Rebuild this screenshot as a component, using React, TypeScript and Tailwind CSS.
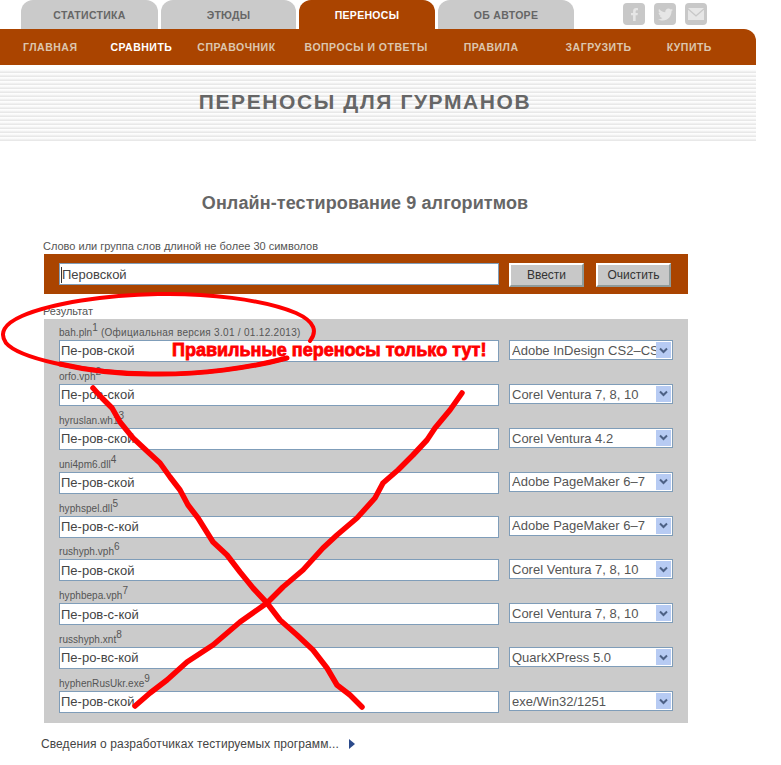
import React from "react";
import { FaFacebookF, FaTwitter } from "react-icons/fa";

const tabs = [
  { label: "Статистика", width: "w-[137px]" },
  { label: "Этюды", width: "w-[135px]" },
  { label: "Переносы", width: "w-[136px]", active: true },
  { label: "Об авторе", width: "w-[136px]" },
];

const navItems = [
  { label: "Главная", className: "ml-[23px]" },
  { label: "Сравнить", className: "ml-[33px] text-white" },
  { label: "Справочник", className: "ml-[25px]" },
  { label: "Вопросы и ответы", className: "ml-[29px]" },
  { label: "Правила", className: "ml-[36px]" },
  { label: "Загрузить", className: "ml-[47px]" },
  { label: "Купить", className: "ml-[35px]" },
];

const results = [
  { name: "bah.pln", sup: "1", note: " (Официальная версия 3.01 / 01.12.2013)", value: "Пе-ров-ской", app: "Adobe InDesign CS2–CS5" },
  { name: "orfo.vph", sup: "2", value: "Пе-ров-ской", app: "Corel Ventura 7, 8, 10" },
  { name: "hyruslan.wh1", sup: "3", value: "Пе-ров-ской", app: "Corel Ventura 4.2" },
  { name: "uni4pm6.dll", sup: "4", value: "Пе-ров-ской", app: "Adobe PageMaker 6–7" },
  { name: "hyphspel.dll", sup: "5", value: "Пе-ров-с-кой", app: "Adobe PageMaker 6–7" },
  { name: "rushyph.vph", sup: "6", value: "Пе-ров-ской", app: "Corel Ventura 7, 8, 10" },
  { name: "hyphbepa.vph", sup: "7", value: "Пе-ров-с-кой", app: "Corel Ventura 7, 8, 10" },
  { name: "russhyph.xnt", sup: "8", value: "Пе-ро-вс-кой", app: "QuarkXPress 5.0" },
  { name: "hyphenRusUkr.exe", sup: "9", value: "Пе-ров-ской", app: "exe/Win32/1251" },
];

const SelectBox = ({ text }: { text: string }) => (
  <div className="ml-[10px] flex h-5 w-[164px] items-center border border-[#7f9db9] bg-white pl-[2px] pr-px">
    <span className="w-[144px] overflow-hidden whitespace-nowrap pt-px text-[13px] text-[#555]">{text}</span>
    <span className="ml-auto flex h-4 w-[15px] items-center justify-center bg-[#b7cbf3]">
      <svg width="9" height="7" viewBox="0 0 9 7">
        <path d="M1 1.5 4.5 5 8 1.5" fill="none" stroke="#4d6185" strokeWidth="2" />
      </svg>
    </span>
  </div>
);

const App = () => {
  return (
    <div className="relative h-[765px] w-[781px] overflow-hidden bg-white font-['Liberation_Sans',Arial,sans-serif]">
      <div className="flex h-[29px]">
        <div className="ml-[21px] flex gap-[3px]">
          {tabs.map((tab) => (
            <div
              key={tab.label}
              className={`flex h-[29px] items-center justify-center rounded-t-xl pt-[2px] text-[10.5px] font-bold uppercase tracking-[0.3px] ${tab.width} ${
                tab.active ? "bg-[#aa4400] text-white" : "bg-[#cacaca] text-[#666]"
              }`}
            >
              {tab.label}
            </div>
          ))}
        </div>
        <div className="ml-[49px] mt-[3px] flex gap-[9px]">
          <span className="flex h-[22px] w-[22px] items-center justify-center rounded bg-[#c8c8c8] text-[13px] text-[#e6e6e6]">
            <FaFacebookF />
          </span>
          <span className="flex h-[22px] w-[22px] items-center justify-center rounded bg-[#c8c8c8] text-[15px] text-[#e6e6e6]">
            <FaTwitter />
          </span>
          <span className="flex h-[22px] w-[22px] items-center justify-center rounded bg-[#c8c8c8]">
            <svg width="16" height="12" viewBox="0 0 16 12">
              <path d="M0 0h16L8 7z" fill="#e6e6e6" />
              <path d="M0 1.8V12h16V1.8L8 8.8z" fill="#e6e6e6" />
            </svg>
          </span>
        </div>
      </div>

      <div className="flex h-9 w-[756px] items-center rounded-tr-xl bg-[#aa4400] pt-[2px] text-[10.5px] font-bold uppercase tracking-[0.5px] text-[#dcc6ae]">
        {navItems.map((item) => (
          <span key={item.label} className={item.className}>
            {item.label}
          </span>
        ))}
      </div>

      <div className="w-[756px] pt-[4px]">
        <div className="h-[72px] bg-[repeating-linear-gradient(to_bottom,#fff_0px,#f8f8f8_2px,#e8e8e8_3px,#e8e8e8_4px)]">
          <h1 className="w-[730px] pt-[21px] text-center text-[21px] font-bold uppercase leading-6 tracking-[1.6px] text-[#666]">
            Переносы для гурманов
          </h1>
        </div>
      </div>

      <h2 className="mt-[52px] w-[730px] text-center text-[18px] font-bold leading-5 tracking-[0.1px] text-[#666]">
        Онлайн-тестирование 9 алгоритмов
      </h2>

      <p className="ml-[43px] mt-[27px] text-[11px] leading-[12px] text-[#555]">
        Слово или группа слов длиной не более 30 символов
      </p>

      <div className="ml-[44px] mt-[2px] flex h-10 w-[644px] items-start bg-[#aa4400] pl-[15px] pt-[9px]">
        <div className="flex h-[22px] w-[440px] items-center border border-[#7f9db9] bg-white pl-px pt-px text-[13px] text-[#444]">
          <span className="h-4 w-px bg-[#333]" />
          Перовской
        </div>
        <button className="ml-[10px] h-6 w-[75px] border-2 border-b-[#8f9b9b] border-l-white border-r-[#8f9b9b] border-t-white bg-[#c8c8c8] text-xs text-[#333]">
          Ввести
        </button>
        <button className="ml-3 h-6 w-[75px] border-2 border-b-[#8f9b9b] border-l-white border-r-[#8f9b9b] border-t-white bg-[#c8c8c8] text-xs text-[#333]">
          Очистить
        </button>
      </div>

      <p className="ml-[43px] mt-[11px] text-[11px] leading-[12px] text-[#555]">Результат</p>

      <div className="ml-[44px] mt-[2px] h-[404px] w-[644px] bg-[#cbcbcb] pl-[15px] pt-[5px]">
        {results.map((row) => (
          <div key={row.name} className="h-[43.875px]">
            <div className="h-4 whitespace-nowrap text-[10px] leading-[17px] tracking-[0.05px] text-[#555]">
              {row.name}
              <sup className="text-[10px] leading-none">{row.sup}</sup>
              <span className="tracking-[0.3px]">{row.note}</span>
            </div>
            <div className="flex">
              <div className="flex h-[22px] w-[440px] items-center border border-[#7f9db9] bg-white pl-px text-[13px] text-[#444]">
                {row.value}
              </div>
              <SelectBox text={row.app} />
            </div>
          </div>
        ))}
      </div>

      <div className="ml-[41px] mt-[14px] flex items-center text-xs leading-[14px] tracking-[0.1px] text-[#444]">
        Сведения о разработчиках тестируемых программ...
        <svg className="ml-[10px]" width="6" height="10" viewBox="0 0 6 10">
          <path d="M0 0 6 5 0 10z" fill="#2b4a8b" />
        </svg>
      </div>

      <svg className="pointer-events-none absolute left-0 top-0" width="781" height="765" viewBox="0 0 781 765" fill="none">
        <path
          d="M310 341C317 332 316 322 296 313C262 299 205 293 158 294C105 295 52 303 22 316C4 324 -1 333 6 343C18 357 75 372 150 374C200 375 250 368 287 358"
          stroke="#f00"
          strokeWidth="4"
          strokeLinecap="round"
        />
        <path d="M60 364C90 371 120 374 150 374C200 375 250 368 287 358" stroke="#f00" strokeWidth="5" strokeLinecap="round" />
        <g className="blur-[0.7px]" stroke="#f00" strokeWidth="5.5" strokeLinecap="round" strokeLinejoin="round">
          <path d="M93 388 102 398 112 408 120 422 133 438 148 452 160 463 170 477 180 490 188 505 198 518 213 542 227 555 240 572 253 588 267 603 280 620 297 635 313 650 327 668 337 685 350 695 362 707" />
          <path d="M462 393 450 410 435 428 427 440 413 455 398 470 383 483 375 498 357 518 337 535 323 548 303 570 283 587 267 603 240 622 213 645 187 662 167 680 150 693 135 706" />
        </g>
      </svg>

      <div className="absolute left-[172px] top-[340px] whitespace-nowrap text-[18px] font-bold leading-5 text-[#f00] [-webkit-text-stroke:0.8px_#f00]">
        Правильные переносы только тут!
      </div>
    </div>
  );
};

export default App;
